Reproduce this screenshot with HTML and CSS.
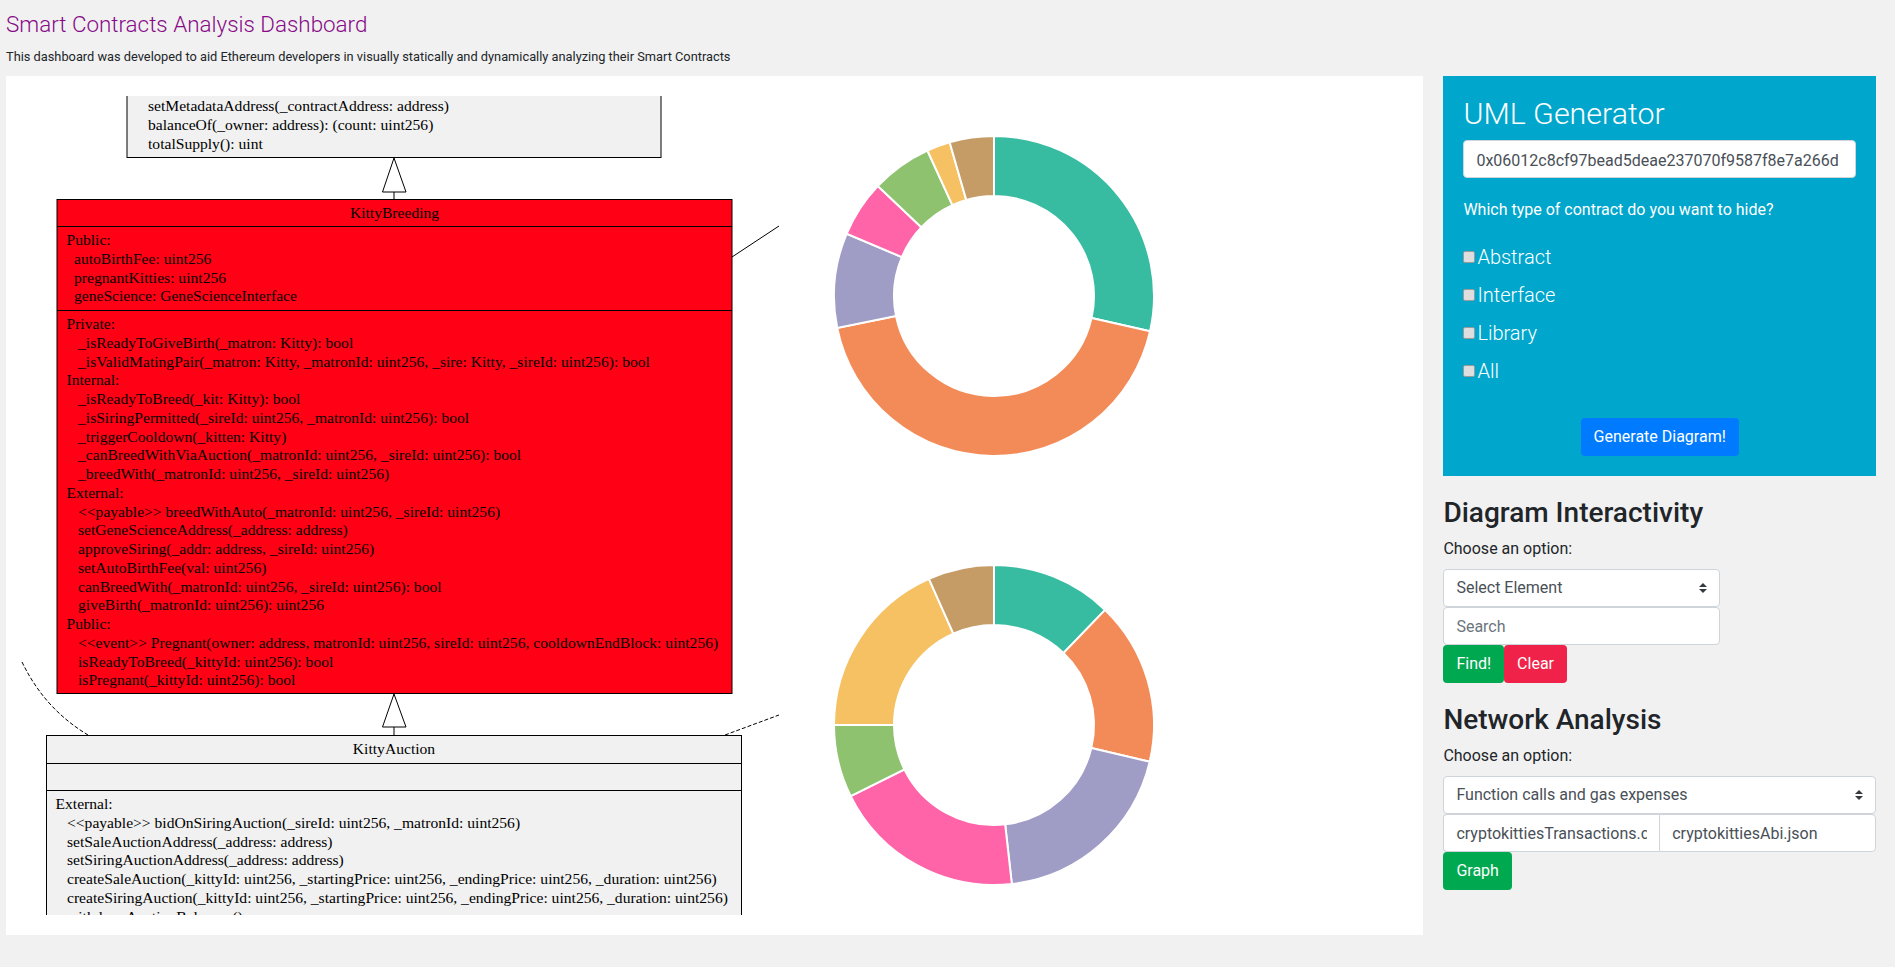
FILE: index.html
```html
<!DOCTYPE html>
<html lang="en">
<head>
    <meta charset="UTF-8">
    <title>Smart Contracts Analysis Dashboard</title>
    <link rel="stylesheet" href="styles.css">
</head>
<body>
    <header class="page-header">
        <h1 class="page-title">Smart Contracts Analysis Dashboard</h1>
        <p class="page-intro">This dashboard was developed to aid Ethereum developers in visually statically and dynamically analyzing their Smart Contracts</p>
    </header>

    <main class="layout">
        <section class="board">
            <div class="diagram">
                <svg class="uml" width="773" height="819" viewBox="6 96 773 819">
                    <!-- association lines -->
                    <path class="edge" d="M732 257L779 226"/>
                    <path class="edge dashed" d="M22 662C38 695 60 718 88 735"/>
                    <path class="edge dashed" d="M725 735L779 715"/>

                    <!-- parent class, cut off by the top of the canvas -->
                    <rect class="uml-box" x="127" y="60" width="534" height="97.5"/>
                    <text class="uml-text" y="111">
                        <tspan x="148">setMetadataAddress(_contractAddress: address)</tspan>
                        <tspan x="148" dy="18.75">balanceOf(_owner: address): (count: uint256)</tspan>
                        <tspan x="148" dy="18.75">totalSupply(): uint</tspan>
                    </text>

                    <path class="edge" d="M394 192V199"/>
                    <path class="arrow" d="M394 158L382.5 192H406Z"/>

                    <!-- KittyBreeding -->
                    <rect class="uml-box selected" x="57" y="199.5" width="675" height="494"/>
                    <path class="edge" d="M57 226.5H732M57 310.5H732"/>
                    <text class="uml-text uml-name" x="394.5" y="218">KittyBreeding</text>
                    <text class="uml-text" y="245">
                        <tspan x="66.5">Public:</tspan>
                        <tspan x="74" dy="18.75">autoBirthFee: uint256</tspan>
                        <tspan x="74" dy="18.75">pregnantKitties: uint256</tspan>
                        <tspan x="74" dy="18.75">geneScience: GeneScienceInterface</tspan>
                    </text>
                    <text class="uml-text" y="329">
                        <tspan x="66.5">Private:</tspan>
                        <tspan x="78" dy="18.75">_isReadyToGiveBirth(_matron: Kitty): bool</tspan>
                        <tspan x="78" dy="18.75">_isValidMatingPair(_matron: Kitty, _matronId: uint256, _sire: Kitty, _sireId: uint256): bool</tspan>
                        <tspan x="66.5" dy="18.75">Internal:</tspan>
                        <tspan x="78" dy="18.75">_isReadyToBreed(_kit: Kitty): bool</tspan>
                        <tspan x="78" dy="18.75">_isSiringPermitted(_sireId: uint256, _matronId: uint256): bool</tspan>
                        <tspan x="78" dy="18.75">_triggerCooldown(_kitten: Kitty)</tspan>
                        <tspan x="78" dy="18.75">_canBreedWithViaAuction(_matronId: uint256, _sireId: uint256): bool</tspan>
                        <tspan x="78" dy="18.75">_breedWith(_matronId: uint256, _sireId: uint256)</tspan>
                        <tspan x="66.5" dy="18.75">External:</tspan>
                        <tspan x="78" dy="18.75">&lt;&lt;payable&gt;&gt; breedWithAuto(_matronId: uint256, _sireId: uint256)</tspan>
                        <tspan x="78" dy="18.75">setGeneScienceAddress(_address: address)</tspan>
                        <tspan x="78" dy="18.75">approveSiring(_addr: address, _sireId: uint256)</tspan>
                        <tspan x="78" dy="18.75">setAutoBirthFee(val: uint256)</tspan>
                        <tspan x="78" dy="18.75">canBreedWith(_matronId: uint256, _sireId: uint256): bool</tspan>
                        <tspan x="78" dy="18.75">giveBirth(_matronId: uint256): uint256</tspan>
                        <tspan x="66.5" dy="18.75">Public:</tspan>
                        <tspan x="78" dy="18.75">&lt;&lt;event&gt;&gt; Pregnant(owner: address, matronId: uint256, sireId: uint256, cooldownEndBlock: uint256)</tspan>
                        <tspan x="78" dy="18.75">isReadyToBreed(_kittyId: uint256): bool</tspan>
                        <tspan x="78" dy="18.75">isPregnant(_kittyId: uint256): bool</tspan>
                    </text>

                    <path class="edge" d="M394 727V735"/>
                    <path class="arrow" d="M394 694L382.5 727H406Z"/>

                    <!-- KittyAuction, runs past the bottom of the canvas -->
                    <rect class="uml-box" x="46.5" y="735.5" width="695" height="260"/>
                    <path class="edge" d="M46 763.5H742M46 790.5H742"/>
                    <text class="uml-text uml-name" x="394" y="754">KittyAuction</text>
                    <text class="uml-text" y="809">
                        <tspan x="55.5">External:</tspan>
                        <tspan x="67" dy="18.75">&lt;&lt;payable&gt;&gt; bidOnSiringAuction(_sireId: uint256, _matronId: uint256)</tspan>
                        <tspan x="67" dy="18.75">setSaleAuctionAddress(_address: address)</tspan>
                        <tspan x="67" dy="18.75">setSiringAuctionAddress(_address: address)</tspan>
                        <tspan x="67" dy="18.75">createSaleAuction(_kittyId: uint256, _startingPrice: uint256, _endingPrice: uint256, _duration: uint256)</tspan>
                        <tspan x="67" dy="18.75">createSiringAuction(_kittyId: uint256, _startingPrice: uint256, _endingPrice: uint256, _duration: uint256)</tspan>
                        <tspan x="67" dy="18.75">withdrawAuctionBalances()</tspan>
                    </text>
                </svg>
            </div>

            <div class="charts">
                <svg class="donut" width="320" height="320" viewBox="-160 -160 320 320" data-stops="102.75,258.5,292.9,313.4,335.4,343.9,360"></svg>
                <svg class="donut" width="320" height="320" viewBox="-160 -160 320 320" data-stops="44,103.3,173.6,243.6,270,336,360"></svg>
            </div>
        </section>

        <aside class="sidebar">
            <form class="generator">
                <h3 class="generator-title">UML Generator</h3>
                <input type="text" class="field" value="0x06012c8cf97bead5deae237070f9587f8e7a266d">
                <p class="generator-question">Which type of contract do you want to hide?</p>
                <label class="check"><input type="checkbox">Abstract</label>
                <label class="check"><input type="checkbox">Interface</label>
                <label class="check"><input type="checkbox">Library</label>
                <label class="check"><input type="checkbox">All</label>
                <div class="generator-action">
                    <button type="button" class="btn btn-blue">Generate Diagram!</button>
                </div>
            </form>

            <h3 class="tool-title">Diagram Interactivity</h3>
            <label class="tool-label">Choose an option:</label>
            <div class="narrow">
                <select class="field select"><option>Select Element</option></select>
                <input type="text" class="field" placeholder="Search">
            </div>
            <div class="btn-row">
                <button type="button" class="btn btn-green">Find!</button>
                <button type="button" class="btn btn-red">Clear</button>
            </div>

            <h3 class="tool-title">Network Analysis</h3>
            <label class="tool-label">Choose an option:</label>
            <select class="field select"><option>Function calls and gas expenses</option></select>
            <div class="file-row">
                <input type="text" class="field" value="cryptokittiesTransactions.csv">
                <input type="text" class="field" value="cryptokittiesAbi.json">
            </div>
            <div class="btn-row">
                <button type="button" class="btn btn-green">Graph</button>
            </div>
        </aside>
    </main>

    <script src="charts.js"></script>
</body>
</html>
```

FILE: styles.css
```css
* {
    box-sizing: border-box;
}

body {
    margin: 0;
    background: #f1f1f1;
    color: #212529;
    font-family: Roboto, sans-serif;
    font-size: 16px;
    line-height: 1.5;
}

.page-header {
    padding: 11px 6px 0;
    height: 76px;
}

.page-title {
    margin: 0;
    color: #870a87;
    font-size: 22.4px;
    font-weight: 300;
    line-height: 27px;
}

.page-intro {
    margin: 9px 0 0;
    font-size: 12.8px;
    line-height: 19px;
}

.layout {
    display: flex;
    align-items: flex-start;
    padding: 0 6px;
}

/* white board with the diagram and the charts */
.board {
    display: flex;
    width: 1417px;
    height: 859px;
    padding: 20px 0;
    background: #fff;
}

.diagram {
    width: 773px;
    height: 819px;
    overflow: hidden;
}

.uml {
    display: block;
}

.uml-box {
    fill: #f1f1f1;
    stroke: #000;
}

.uml-box.selected {
    fill: #ff0015;
}

.edge {
    fill: none;
    stroke: #000;
}

.dashed {
    stroke-dasharray: 4 2;
}

.arrow {
    fill: #fff;
    stroke: #000;
}

.uml-text {
    fill: #000;
    font-family: "Liberation Serif", serif;
    font-size: 15.6px;
}

.uml-name {
    text-anchor: middle;
}

.charts {
    display: flex;
    flex-direction: column;
    gap: 109px;
    margin-left: 55px;
    padding-top: 40px;
}

.donut {
    display: block;
    overflow: visible;
}

.donut path {
    stroke: #fff;
    stroke-width: 2;
}

/* right column */
.sidebar {
    width: 432.6px;
    margin-left: 20.4px;
}

.generator {
    height: 400px;
    padding: 20px;
    background: #00a6cc;
    color: #fff;
}

.generator-title {
    margin: 0 0 7.5px;
    font-size: 30.4px;
    font-weight: 300;
    line-height: 36.5px;
}

.generator-question {
    margin: 20px 0 20px;
}

.check {
    display: flex;
    align-items: center;
    height: 30px;
    margin-bottom: 8px;
    font-size: 20px;
    font-weight: 300;
}

.check input {
    appearance: none;
    width: 12px;
    height: 12px;
    margin: 0 2px 0 0;
    border: 1px solid #9a9a9a;
    border-radius: 2px;
    background: #dedede;
}

.generator-action {
    margin-top: 32px;
    text-align: center;
}

.field {
    display: block;
    width: 100%;
    height: 38px;
    padding: 6px 12px;
    border: 1px solid #ced4da;
    border-radius: 4px;
    background: #fff;
    color: #495057;
    font-family: Roboto, sans-serif;
    font-size: 16px;
    line-height: 1.5;
}

input.field {
    padding-top: 7px;
    padding-bottom: 5px;
}

.field::placeholder {
    color: #6c757d;
}

.select {
    appearance: none;
    background: #fff url("data:image/svg+xml,%3csvg xmlns='http://www.w3.org/2000/svg' viewBox='0 0 4 5'%3e%3cpath fill='%23343a40' d='M2 0L0 2h4zm0 5L0 3h4z'/%3e%3c/svg%3e") no-repeat right 12px center / 8px 10px;
}

.btn {
    height: 38px;
    padding: 6px 12px;
    border: 1px solid transparent;
    border-radius: 4px;
    color: #fff;
    font-family: Roboto, sans-serif;
    font-size: 16px;
    line-height: 1.5;
}

.btn-blue {
    background: #007bff;
}

.btn-green {
    background: #00a94f;
}

.btn-red {
    background: #f12249;
}

.btn-row {
    display: flex;
}

.tool-title {
    margin: 20px 0 7.4px;
    font-size: 28px;
    font-weight: 500;
    line-height: 33.6px;
}

.tool-label {
    display: block;
    margin-bottom: 8px;
}

.narrow {
    width: 276.6px;
}

.file-row {
    display: flex;
}

.file-row .field {
    flex: 1;
    min-width: 0;
}

.file-row .field:first-child {
    border-right: 0;
    border-radius: 4px 0 0 4px;
}

.file-row .field:last-child {
    border-radius: 0 4px 4px 0;
}
```

FILE: charts.js
```js
const colors = ["#38bca1", "#f38b59", "#9f9cc6", "#ff63a8", "#8ec26f", "#f6c162", "#c69c66"];
const outerR = 160;
const innerR = 100;

function point(radius, deg) {
    const rad = (deg - 90) * Math.PI / 180;
    return (radius * Math.cos(rad)).toFixed(2) + " " + (radius * Math.sin(rad)).toFixed(2);
}

// each chart lists the angle at which its slices end, clockwise from the top
document.querySelectorAll(".donut").forEach((chart) => {
    const stops = chart.dataset.stops.split(",").map(Number);
    let start = 0;

    stops.forEach((end, i) => {
        const big = end - start > 180 ? 1 : 0;
        const slice = document.createElementNS("http://www.w3.org/2000/svg", "path");
        slice.setAttribute("fill", colors[i]);
        slice.setAttribute("d",
            `M${point(outerR, start)}A${outerR} ${outerR} 0 ${big} 1 ${point(outerR, end)}` +
            `L${point(innerR, end)}A${innerR} ${innerR} 0 ${big} 0 ${point(innerR, start)}Z`);
        chart.appendChild(slice);
        start = end;
    });
});
```
